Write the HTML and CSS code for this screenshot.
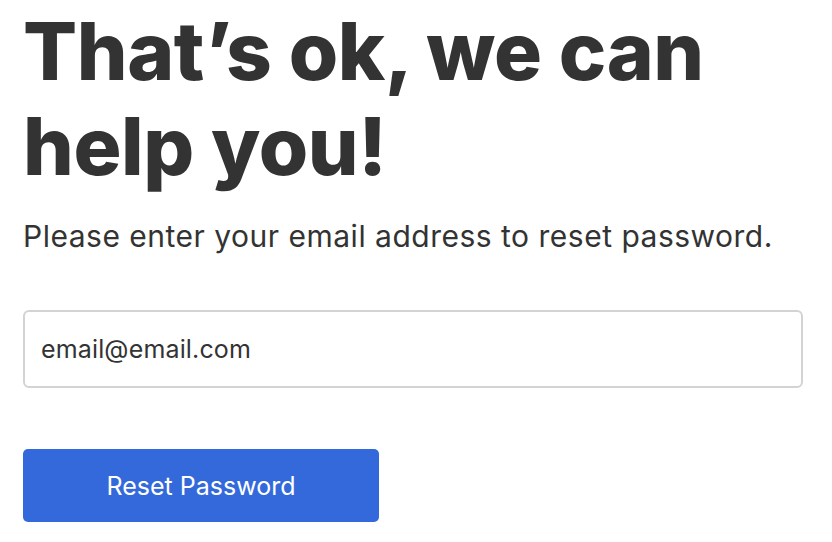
FILE: index.html
```html
<!doctype html>
<html lang="en">
  <head>
    <meta charset="UTF-8" />
    <meta name="viewport" content="width=device-width, initial-scale=1.0" />
    <title>Reset Password</title>
    <link rel="stylesheet" href="styles.css">
  </head>
  <body>
    <div class="container">
      <h1 class="title">That’s ok, we can help you!</h1>
      <p class="subtitle">Please enter your email address to reset password.</p>

      <form class="reset-form">
        <input class="email-input" type="email" value="email@email.com" />
        <button class="reset-btn" type="button">Reset Password</button>
      </form>
    </div>
  </body>
</html>
```

FILE: styles.css
```css
* {
  margin: 0;
  padding: 0;
  box-sizing: border-box;
}

body {
  font-family: Inter, 'Liberation Sans', sans-serif;
  background: #fff;
  color: #333;
}

.container {
  padding: 3px 29px 0 23px;
}

.title {
  font-size: 80px;
  font-weight: 800;
  line-height: 95px;
  letter-spacing: -0.4px;
  color: #333;
  max-width: 720px;
}

.subtitle {
  margin-top: 25px;
  font-size: 30px;
  line-height: 36px;
  letter-spacing: 0.5px;
  color: #333;
}

.reset-form {
  display: flex;
  flex-direction: column;
  align-items: flex-start;
  gap: 61px;
  margin-top: 56px;
}

.email-input {
  width: 100%;
  height: 78px;
  padding: 0 16px;
  font-family: inherit;
  font-size: 25px;
  letter-spacing: 0.15px;
  color: #333;
  border: 2px solid #d3d3d3;
  border-radius: 6px;
  outline: none;
}

.reset-btn {
  width: 356px;
  height: 73px;
  background: #3369db;
  color: #fff;
  border: none;
  border-radius: 5px;
  font-family: inherit;
  font-size: 25px;
  cursor: pointer;
}
```
